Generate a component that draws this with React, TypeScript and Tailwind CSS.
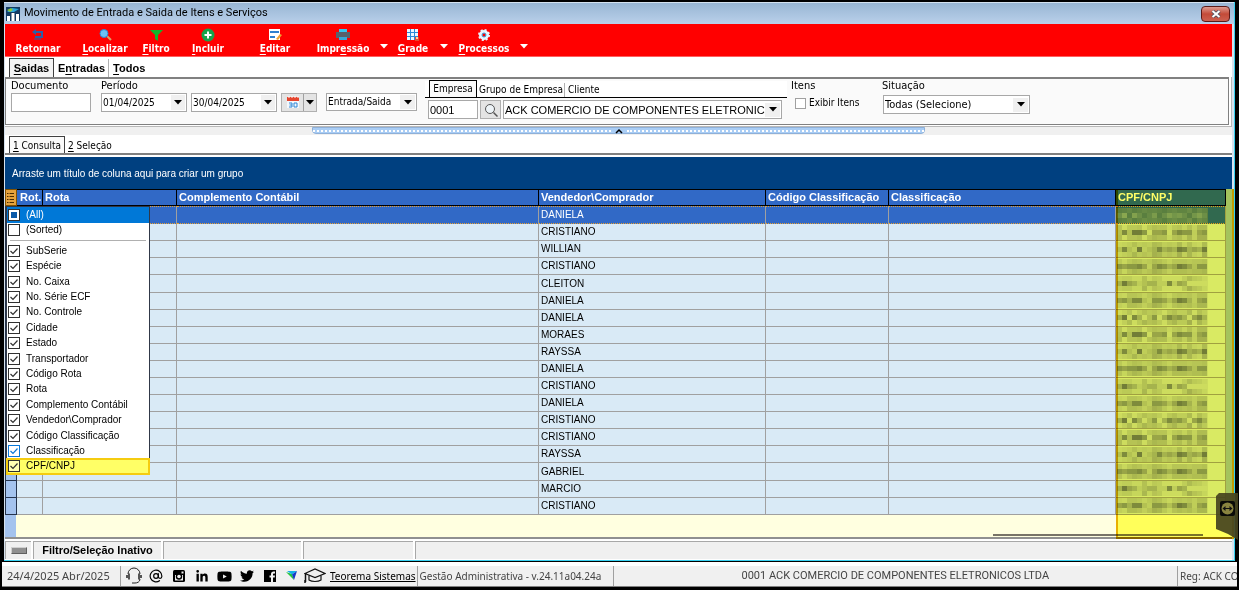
import type { ReactNode } from "react";
import { AtSign } from "lucide-react";
import { FaLinkedinIn, FaTwitter, FaYoutube } from "react-icons/fa";

const UI_FONT = "font-['DejaVu_Sans_Condensed','DejaVu_Sans',sans-serif]";
const GRID_FONT = "font-['Liberation_Sans',sans-serif]";
const STATUS_FONT = "font-['Noto_Sans',sans-serif]";
const TITLE_FONT = "font-['Roboto',sans-serif]";

const COLUMN_OPTIONS = [
  "SubSerie",
  "Espécie",
  "No. Caixa",
  "No. Série ECF",
  "No. Controle",
  "Cidade",
  "Estado",
  "Transportador",
  "Código Rota",
  "Rota",
  "Complemento Contábil",
  "Vendedor\\Comprador",
  "Código Classificação",
  "Classificação",
  "CPF/CNPJ",
];

const SELLERS = [
  "DANIELA",
  "CRISTIANO",
  "WILLIAN",
  "CRISTIANO",
  "CLEITON",
  "DANIELA",
  "DANIELA",
  "MORAES",
  "RAYSSA",
  "DANIELA",
  "CRISTIANO",
  "DANIELA",
  "CRISTIANO",
  "CRISTIANO",
  "RAYSSA",
  "GABRIEL",
  "MARCIO",
  "CRISTIANO",
];

// darkness of each block in the masked document number, 0 to 9
const MASKS = [
  "370630250364530463",
  "262775044504655145",
  "262171236343763437",
  "545564146534764255",
  "374312331161430000",
  "453662155424763145",
];

function Hot({ text, at = 0 }: { text: string; at?: number }) {
  return (
    <span>
      {text.slice(0, at)}
      <span className="underline underline-offset-2">{text[at]}</span>
      {text.slice(at + 1)}
    </span>
  );
}

function Triangle({ className = "fill-black" }: { className?: string }) {
  return (
    <svg viewBox="0 0 8 5" className={`h-[5px] w-2 shrink-0 ${className}`} aria-hidden="true">
      <path d="M0 0h8L4 4.6z" />
    </svg>
  );
}

function ToolButton({
  label,
  at = 0,
  className,
  children,
}: {
  label: string;
  at?: number;
  className: string;
  children: ReactNode;
}) {
  return (
    <button
      type="button"
      className={`flex shrink-0 flex-col items-center pt-1 text-[10px] font-bold leading-[13px] text-white ${className}`}
    >
      <svg viewBox="0 0 16 14" className="h-[14px] w-4" aria-hidden="true">
        {children}
      </svg>
      {at < 0 ? label : <Hot text={label} at={at} />}
    </button>
  );
}

function ToolArrow({ label }: { label: string }) {
  return (
    <button type="button" aria-label={label} className="flex w-3 shrink-0 justify-center pt-5">
      <Triangle className="fill-white" />
    </button>
  );
}

function Toolbar() {
  return (
    <div className="flex h-[33px] border-b border-[#ff6060] bg-[#ff0000]">
      <ToolButton label="Retornar" at={-1} className="ml-2 w-[50px]">
        <path d="M4 4h8v5H5" fill="none" stroke="#2b5fa8" strokeWidth="2" />
        <path d="M6 1v6L2 4z" fill="#2b5fa8" />
        <path d="M4 11h7" stroke="#2b5fa8" />
      </ToolButton>
      <ToolButton label="Localizar" className="ml-[17px] w-[50px]">
        <path d="M10 8l4 4" stroke="#d9a36c" strokeWidth="2" />
        <circle cx="7" cy="5.500" r="4" fill="#6cc0f5" stroke="#2d86d0" />
      </ToolButton>
      <ToolButton label="Filtro" className="ml-[10px] w-8">
        <path d="M2 2h13L10 7v6l-3-2V7z" fill="#12b52c" />
      </ToolButton>
      <ToolButton label="Incluir" className="ml-4 w-10">
        <circle cx="8" cy="7" r="6.500" fill="#16a34a" />
        <path d="M8 3.500v7M4.500 7h7" stroke="#fff" strokeWidth="2" />
      </ToolButton>
      <ToolButton label="Editar" className="ml-[27px] w-10">
        <path d="M2 1h11v11H2z" fill="#fff" />
        <path d="M3 4h9M3 9h5" stroke="#2d7fd0" strokeWidth="2" />
        <path d="M9 11l4-5 2 1-4 5z" fill="#f0a030" />
      </ToolButton>
      <ToolButton label="Impressão" at={4} className="ml-[18px] w-[60px]">
        <path d="M4 1h8v4H4z" fill="#38c6f0" />
        <path d="M1 4h14v6H1z" fill="#59606b" />
        <path d="M4 9h8v3H4z" fill="#38a8d8" />
      </ToolButton>
      <div className="ml-[5px] flex">
        <ToolArrow label="Opções de impressão" />
      </div>
      <ToolButton label="Grade" className="ml-[3px] w-10">
        <path d="M2 1h11v11H2z" fill="#e8f6ff" />
        <path d="M2 4.500h11M2 8.500h11M5.500 1v11M9.500 1v11" stroke="#288ad6" />
        <path d="M10 9h4v4h-4z" fill="#e84a30" />
        <path d="M11 9h2v2h-2z" fill="#ffd6a0" />
      </ToolButton>
      <div className="ml-[5px] flex">
        <ToolArrow label="Opções de grade" />
      </div>
      <ToolButton label="Processos" className="ml-1 w-[60px]">
        <circle cx="8" cy="7" r="3.500" fill="none" stroke="#e6f5ff" strokeWidth="3" />
        <circle cx="8" cy="7" r="5" fill="none" stroke="#e6f5ff" strokeWidth="2" strokeDasharray="2 1.927" />
        <circle cx="8" cy="7" r="2" fill="none" stroke="#37a4e4" />
      </ToolButton>
      <div className="ml-1 flex">
        <ToolArrow label="Opções de processos" />
      </div>
    </div>
  );
}

function Combo({ label, value, className }: { label: string; value: string; className: string }) {
  return (
    <div className={`grid shrink-0 items-center border border-[#a8a8a8] bg-white ${className}`}>
      <select
        aria-label={label}
        className="col-start-1 row-start-1 h-full w-full min-w-0 appearance-none overflow-hidden bg-transparent pl-px pr-[15px] text-clip whitespace-nowrap outline-none"
      >
        <option>{value}</option>
      </select>
      <span className="pointer-events-none col-start-1 row-start-1 mr-px flex h-[14px] w-[15px] items-center justify-center justify-self-end bg-[#f0f0f0]">
        <Triangle />
      </span>
    </div>
  );
}

function DateField({ label, value }: { label: string; value: string }) {
  return (
    <div className="flex h-[19px] w-[86px] items-center border border-[#a8a8a8] bg-white">
      <input aria-label={label} defaultValue={value} className="w-0 flex-1 pl-px outline-none" />
      <button
        type="button"
        aria-label={`Abrir ${label}`}
        className="mr-px flex h-[15px] w-[14px] items-center justify-center bg-[#f0f0f0]"
      >
        <Triangle />
      </button>
    </div>
  );
}

function FilterPanel() {
  return (
    <div className="h-[50px] border-r border-b border-[#b8b8b8] bg-white pr-[2px] pb-px">
      <div className="flex h-[48px] items-start border-t-2 border-r border-b border-l border-[#808080] bg-[#fafafa] pl-[5px] text-[11px] leading-[14px]">
        <div className="flex w-20 flex-col">
          <label htmlFor="documento">Documento</label>
          <input id="documento" className="h-[19px] w-full border border-[#a8a8a8] bg-white px-1 outline-none" />
        </div>
        <div className="ml-[10px]">
          <span>Período</span>
          <div className="flex gap-1 text-[10px]">
            <DateField label="data inicial" value="01/04/2025" />
            <DateField label="data final" value="30/04/2025" />
            <button
              type="button"
              aria-label="Calendário"
              className="flex h-[19px] w-9 items-center border border-[#b0b0b0] bg-[#e4e4e4]"
            >
              <span className="flex h-full flex-1 items-center justify-center border-r border-[#a0a0a0]">
                <svg viewBox="0 0 12 13" className="h-[13px] w-3" aria-hidden="true">
                  <path d="M0 1h12v11H0z" fill="#f4f8fc" />
                  <path d="M0 1h12v4H0z" fill="#e5452f" />
                  <path d="M2 0v2M5 0v2M8 0v2M11 0v2" stroke="#fff" />
                  <path d="M2 7h3v4H2M2.500 9H5M7 7h3v4H7z" fill="none" stroke="#2c86d6" />
                </svg>
              </span>
              <span className="flex w-3 justify-center">
                <Triangle />
              </span>
            </button>
          </div>
        </div>
        <Combo label="Tipo de data" value="Entrada/Saida" className="mt-[14px] ml-[9px] h-[18px] w-[91px] text-[10px]" />
        <div className="mt-[2px] ml-2 w-[362px]">
          <div className="flex h-[17px] items-end border-b border-black bg-white pl-1 text-[10px]" role="tablist">
            <button
              type="button"
              role="tab"
              aria-selected="true"
              className="h-[17px] w-12 border-x border-t border-black bg-[#fafafa]"
            >
              Empresa
            </button>
            <button type="button" role="tab" className="ml-[2px] border-r border-[#b0b0b0] pr-px">
              Grupo de Empresa
            </button>
            <button type="button" role="tab" className="ml-[3px]">
              Cliente
            </button>
          </div>
          <div className={`mt-[2px] flex gap-[2px] pl-[3px] ${GRID_FONT}`}>
            <input
              aria-label="Código da empresa"
              defaultValue="0001"
              className="h-[19px] w-[50px] border border-[#a8a8a8] bg-white pl-px outline-none"
            />
            <button
              type="button"
              aria-label="Pesquisar empresa"
              className="flex h-[19px] w-[21px] items-center justify-center border border-[#b0b0b0] bg-[#e4e4e4]"
            >
              <svg viewBox="0 0 14 14" className="h-[14px] w-[14px]" fill="none" stroke="#555" aria-hidden="true">
                <circle cx="6" cy="6" r="4.500" fill="#edf3f7" />
                <path d="M9.500 9.500l4 4" strokeWidth="1.500" />
              </svg>
            </button>
            <Combo
              label="Empresa"
              value="ACK COMERCIO DE COMPONENTES ELETRONICOS LTDA"
              className="h-[19px] w-[279px]"
            />
          </div>
        </div>
        <div className="ml-1 w-[91px]">
          <div>Itens</div>
          <label className="mt-[3px] flex items-center gap-[3px] pl-1 text-[10px]">
            <input type="checkbox" className="h-[11px] w-[11px] appearance-none border border-[#a0a0a0] bg-white" />
            Exibir Itens
          </label>
        </div>
        <div>
          <div>Situação</div>
          <Combo label="Situação" value="Todas (Selecione)" className="mt-[2px] ml-px h-[19px] w-[147px]" />
        </div>
      </div>
    </div>
  );
}

function Splitter() {
  return (
    <div className="flex h-2 justify-center bg-[#f0f0f0]">
      <button
        type="button"
        aria-label="Recolher filtros"
        className="flex h-[7px] w-1/2 items-center rounded-b border border-[#8fb0d8] bg-[#a9cdf5]"
      >
        <span className="h-0 flex-1 border-t-2 border-dotted border-white" />
        <svg viewBox="0 0 16 6" className="h-[6px] w-4" aria-hidden="true">
          <path d="M5 5l3-3 3 3" fill="none" stroke="#000" strokeWidth="1.500" />
        </svg>
        <span className="h-0 flex-1 border-t-2 border-dotted border-white" />
      </button>
    </div>
  );
}

function Mask({ index }: { index: number }) {
  const mask = MASKS[index % MASKS.length];
  const first = index === 0;
  return (
    <svg viewBox="0 0 92 15" className="block h-[15px] w-[92px]" shapeRendering="crispEdges" aria-hidden="true">
      <rect width="92" height="15" fill={first ? "#5a7f9e" : "#cddcea"} />
      {mask.split("").map((c, i) => {
        const dark = Number(c);
        const edge = Number(mask[(i + 5) % mask.length]);
        return (
          <g key={i} fill={first ? "#a4bede" : "#3c4650"}>
            <rect x={i * 5 + 1} y={0} width={5} height={5} opacity={edge * 0.03} />
            <rect x={i * 5 + 1} y={5} width={5} height={5} opacity={dark * 0.09} />
            <rect x={i * 5 + 1} y={10} width={5} height={5} opacity={edge * 0.04} />
          </g>
        );
      })}
    </svg>
  );
}

function Grid() {
  const th = "truncate border-y border-r border-black bg-[#3169c6] px-[2px] py-0 text-left font-bold";
  return (
    <table
      className={`h-[326px] w-full table-fixed border-separate border-spacing-0 text-[10px] leading-[14px] ${GRID_FONT}`}
    >
      <colgroup>
        <col className="w-3" />
        <col className="w-[26px]" />
        <col className="w-[134px]" />
        <col />
        <col className="w-[227px]" />
        <col className="w-[123px]" />
        <col className="w-[227px]" />
        <col className="w-[110px]" />
      </colgroup>
      <thead>
        <tr className="h-[17px] text-[11px] leading-[15px] text-white">
          <th className="border border-[#805000] bg-[#e6a23c] p-0">
            <button type="button" aria-label="Escolher colunas" className="block">
              <svg viewBox="0 0 9 13" className="h-[13px] w-[9px]" stroke="#4a2c00" aria-hidden="true">
                <path d="M1 2.500h1.500M1 5.500h1.500M1 8.500h1.500M1 11.500h1.500M3.500 2.500H8M3.500 5.500H8M3.500 8.500H8M3.500 11.500H8" />
              </svg>
            </button>
          </th>
          <th className="border-y border-r border-black bg-[#3169c6] py-0 pr-0 pl-[3px] text-left">Rot.</th>
          <th className={th}>Rota</th>
          <th className={th}>Complemento Contábil</th>
          <th className={th}>Vendedor\Comprador</th>
          <th className={th}>Código Classificação</th>
          <th className={th}>Classificação</th>
          <th className={th}>CPF/CNPJ</th>
        </tr>
      </thead>
      <tbody>
        {SELLERS.map((seller, i) => {
          const td =
            i === 0
              ? "border-r border-y border-y-[#e8a030] border-r-[#a0a0a0] [border-block-style:dotted] bg-[#3169c6] px-[2px] py-0 text-white"
              : "border-r border-b border-[#a0a0a0] bg-[#d9eaf6] px-[2px] py-0";
          return (
            <tr key={i}>
              <td className="border-x border-b border-[#26344c] bg-[#a4c3ee] p-0" />
              <td className={td} />
              <td className={td} />
              <td className={td} />
              <td className={td}>{seller}</td>
              <td className={td} />
              <td className={td} />
              <td className={`${td} pl-0`}>
                <Mask index={i} />
              </td>
            </tr>
          );
        })}
      </tbody>
    </table>
  );
}

function CheckBox({ state, blue }: { state: "on" | "off" | "mixed"; blue?: boolean }) {
  const color = blue ? "#0a78d8" : "#303030";
  return (
    <svg viewBox="0 0 12 12" className="h-3 w-3 shrink-0" fill="none" aria-hidden="true">
      <rect x=".5" y=".5" width="11" height="11" fill="#fff" fillOpacity={state === "mixed" ? 1 : 0.5} stroke={color} />
      {state === "on" && <path d="M2.500 6l2.500 2.500L9.500 3.500" stroke={color} strokeWidth="1.200" />}
      {state === "mixed" && <rect x="3" y="3" width="6" height="6" fill="#0a5aa8" />}
    </svg>
  );
}

function ColumnOption({
  label,
  state = "on",
  blue,
  className = "",
}: {
  label: string;
  state?: "on" | "off" | "mixed";
  blue?: boolean;
  className?: string;
}) {
  return (
    <label className={`flex flex-1 items-center gap-[6px] pl-px ${className}`}>
      <input type="checkbox" className="sr-only" defaultChecked={state === "on"} />
      <CheckBox state={state} blue={blue} />
      {label}
    </label>
  );
}

function ColumnMenu() {
  return (
    <div
      className={`absolute top-[17px] left-px z-10 flex h-[269px] w-[144px] flex-col border border-[#303848] bg-white text-[10px] leading-[12px] ${GRID_FONT}`}
    >
      <div className="flex h-[31px] flex-col">
        <ColumnOption label="(All)" state="mixed" className="bg-[#0078d7] text-white" />
        <ColumnOption label="(Sorted)" state="off" />
      </div>
      <hr className="mx-[3px] my-[2px] border-t border-[#b0b0b0]" />
      <div className="flex flex-1 flex-col">
        {COLUMN_OPTIONS.map((name) => (
          <ColumnOption
            key={name}
            label={name}
            blue={name === "Classificação"}
            className={name === "CPF/CNPJ" ? "bg-[#ffff66] outline-2 -outline-offset-1 outline-[#f5cc10]" : ""}
          />
        ))}
      </div>
    </div>
  );
}

function SideTab() {
  return (
    <button type="button" aria-label="Painel remoto" className="absolute top-[304px] -right-[6px] z-20 h-12 w-[23px]">
      <svg viewBox="0 0 23 48" className="h-12 w-[23px]" aria-hidden="true">
        <path d="M4 0h19v47L13 41 1 36V3z" fill="#46441f" fillOpacity=".93" />
        <rect x="5" y="8" width="15" height="15" rx="2" fill="#0b0b08" />
        <circle cx="12.500" cy="15.500" r="6" fill="#8a8440" />
        <path d="M7.500 15.500l3-2.500v2h4v-2l3 2.500-3 2.500v-2h-4v2z" fill="#111" />
      </svg>
    </button>
  );
}

function FooterIcons() {
  return (
    <div className="flex items-center gap-2 pl-1 text-black">
      <a href="#suporte" aria-label="Suporte">
        <svg viewBox="0 0 18 18" className="h-[18px] w-[18px]" fill="none" stroke="#222" aria-hidden="true">
          <path d="M3 7a6 6 0 0 1 12 0M15 12c0 3-3 4-5 4M7 16h3" />
          <path d="M4 6.500v6M2 8v3M14 6.500v6M16 8v3" strokeWidth="1.500" />
        </svg>
      </a>
      <a href="#email" aria-label="E-mail" className="-ml-[2px]">
        <AtSign className="h-[14px] w-[14px]" strokeWidth={2} />
      </a>
      <a href="#instagram" aria-label="Instagram" className="ml-px">
        <svg viewBox="0 0 14 14" className="h-[14px] w-[14px]" aria-hidden="true">
          <rect x="1" y="1" width="12" height="12" rx="1.500" />
          <path d="M3 6h8v5.500H3z" fill="#f0f0f0" />
          <circle cx="7" cy="7.500" r="3.200" />
          <circle cx="7" cy="7.500" r="1.800" fill="#f0f0f0" />
          <path d="M9.500 2.500h2v2h-2z" fill="#f0f0f0" />
        </svg>
      </a>
      <a href="#linkedin" aria-label="LinkedIn" className="ml-px">
        <FaLinkedinIn className="h-[13px] w-[14px]" />
      </a>
      <a href="#youtube" aria-label="YouTube">
        <FaYoutube className="h-[15px] w-[15px]" />
      </a>
      <a href="#twitter" aria-label="Twitter">
        <FaTwitter className="h-[14px] w-[14px]" />
      </a>
      <a href="#facebook" aria-label="Facebook" className="ml-px">
        <svg viewBox="0 0 14 14" className="h-[14px] w-[14px]" aria-hidden="true">
          <path d="M1 1h12v12H1z" />
          <path d="M8 13V8.500H6.500v-2H8V5c0-1.600 1-2.500 2.500-2.500H12v2h-1c-.7 0-1 .3-1 1v1h2l-.3 2H10V13z" fill="#f0f0f0" />
        </svg>
      </a>
      <a href="#teorema" aria-label="Teorema">
        <svg viewBox="0 0 14 12" className="h-3 w-[14px]" aria-hidden="true">
          <path d="M1 2l6 2 2 6z" fill="#22c43a" />
          <path d="M2 1h10L7 4.500z" fill="#12b0e8" />
          <path d="M12 1L9 10 7 4.500z" fill="#1238c8" />
        </svg>
      </a>
      <a href="#cursos" aria-label="Cursos" className="-ml-[3px]">
        <svg viewBox="0 0 22 16" className="h-4 w-[22px]" fill="none" stroke="#111" strokeWidth="1.200" aria-hidden="true">
          <path d="M1 5.500L11 1l10 4.500L11 9.500z" />
          <path d="M5 7.500V12c3 2 9 2 12 0V7.500" />
          <path d="M1.500 5.500V14M1 12v3" strokeWidth="1.500" />
        </svg>
      </a>
    </div>
  );
}

export default function App() {
  return (
    <div className={`bg-black px-[2px] pt-[2px] pb-[3px] text-black ${UI_FONT}`}>
      <main className="mr-px ml-[2px] border-r border-b border-black">
        <div className="relative border-r border-b border-[#38d0f0] bg-white">
          <header className="flex h-[22px] items-center border-t border-[#d4e2f0] bg-linear-to-b from-[#98b6d4] to-[#bad0ea] pr-1 pl-[2px] text-[11px]">
            <svg viewBox="0 0 14 14" className="h-[14px] w-[14px]" aria-hidden="true">
              <path d="M0 0h14v14H0z" fill="#123a63" />
              <path d="M1 5l5-4 7 1-5 3z" fill="#29a8df" />
              <path d="M1 3l4-2 2 2-3 2z" fill="#8cc63f" />
              <path d="M1 9h3v5H1zM5.500 6h3v8h-3zM10 7h3v7h-3z" fill="#fff" />
            </svg>
            <h1 className={`ml-1 flex-1 ${TITLE_FONT}`}>Movimento de Entrada e Saida de Itens e Serviços</h1>
            <button
              type="button"
              aria-label="Fechar"
              className="flex h-4 w-[29px] items-center justify-center rounded-sm border border-[#5c1a18] bg-linear-to-b from-[#dc9a90] via-[#c34a38] to-[#cc6050]"
            >
              <svg viewBox="0 0 10 8" className="h-2 w-[10px]" aria-hidden="true">
                <path d="M1.500 1l7 6M8.500 1l-7 6" stroke="#4a5060" strokeWidth="3.500" />
                <path d="M1.500 1l7 6M8.500 1l-7 6" stroke="#fff" strokeWidth="2" />
              </svg>
            </button>
          </header>

          <div className="border-r-2 border-l border-[#d6e2ee]">
            <Toolbar />
            <div className={`flex h-5 items-end pl-1 text-[11px] font-bold ${GRID_FONT}`} role="tablist">
              <button
                type="button"
                role="tab"
                aria-selected="true"
                className="h-[19px] w-[45px] border-x border-t border-[#404040] bg-[#f4f4f4]"
              >
                <Hot text="Saidas" />
              </button>
              <button type="button" role="tab" className="h-[18px] border-r border-[#b0b0b0] pr-[3px] pl-1">
                <Hot text="Entradas" at={1} />
              </button>
              <button type="button" role="tab" className="h-[18px] px-1">
                <Hot text="Todos" />
              </button>
            </div>
            <FilterPanel />
            <Splitter />
            <div className="flex h-[18px] items-end pl-1 text-[10px]" role="tablist">
              <button
                type="button"
                role="tab"
                aria-selected="true"
                className="h-[17px] w-14 border-x border-t border-[#404040] bg-[#fafafa]"
              >
                <Hot text="1 Consulta" />
              </button>
              <button type="button" role="tab" className="h-4 px-[3px]">
                <Hot text="2 Seleção" />
              </button>
            </div>
            <div className="mb-[2px] h-[2px] bg-[#808080]" />

            <div className={`flex h-8 items-center bg-[#004080] pl-[7px] text-[10px] text-white ${GRID_FONT}`}>
              Arraste um título de coluna aqui para criar um grupo
            </div>
            <section className="relative">
              <div className="flex">
                <Grid />
                <div className="w-[6px] shrink-0 bg-[#a4c3e8]" />
              </div>
              <div className="flex h-[22px] bg-[#ffffe0]">
                <div className="w-[11px] bg-[#a4c3ee]" />
                <div className="mt-[19px] mr-[29px] ml-auto h-[2px] w-[210px] bg-[#787468]" />
              </div>
              <div className="h-[2px] bg-[#909090]" />
              <ColumnMenu />
              <div className="pointer-events-none absolute top-0 -right-[2px] bottom-0 z-10 w-[118px] border-x-2 border-b-2 border-[#e8b000] bg-[#ffff66] mix-blend-multiply" />
              <SideTab />
            </section>

            <div className={`flex h-[21px] gap-[2px] bg-white pt-[2px] pb-px text-[11px] font-bold ${GRID_FONT}`}>
              <div className="flex w-[26px] items-center justify-center border-t border-l border-[#a8a8a8] bg-[#f0f0f0]">
                <span className="h-[7px] w-4 border border-t-[#d0d0d0] border-r-[#606060] border-b-[#606060] border-l-[#d0d0d0] bg-[#909090]" />
              </div>
              <div className="flex w-32 items-center justify-center border-t border-l border-[#a8a8a8] bg-[#f0f0f0]">
                Filtro/Seleção Inativo
              </div>
              <div className="w-[138px] border-t border-l border-[#a8a8a8] bg-[#f0f0f0]" />
              <div className="w-[110px] border-t border-l border-[#a8a8a8] bg-[#f0f0f0]" />
              <div className="flex-1 border-t border-l border-[#a8a8a8] bg-[#f0f0f0]" />
            </div>
          </div>
        </div>
      </main>

      <footer
        className={`flex h-[25px] items-stretch overflow-hidden border-t-4 border-b border-t-white border-b-[#808080] bg-[#f0f0f0] text-[11px] whitespace-nowrap text-[#444] ${STATUS_FONT}`}
      >
        <div className="flex w-[119px] items-center border-r border-[#a0a0a0] pl-[5px]">24/4/2025 Abr/2025</div>
        <FooterIcons />
        <a href="#site" className="flex items-center border-r border-[#a0a0a0] pr-px pl-1 text-[10px] text-black underline">
          Teorema Sistemas
        </a>
        <div className="flex w-[196px] items-center border-r border-[#a0a0a0] pl-[2px] text-[10px]">
          Gestão Administrativa - v.24.11a04.24a
        </div>
        <div className={`flex flex-1 items-center justify-center ${TITLE_FONT}`}>
          0001 ACK COMERCIO DE COMPONENTES ELETRONICOS LTDA
        </div>
        <div className="flex w-[60px] items-center border-l border-[#a0a0a0] pl-[2px] text-[10px]">Reg: ACK CO</div>
      </footer>
    </div>
  );
}
